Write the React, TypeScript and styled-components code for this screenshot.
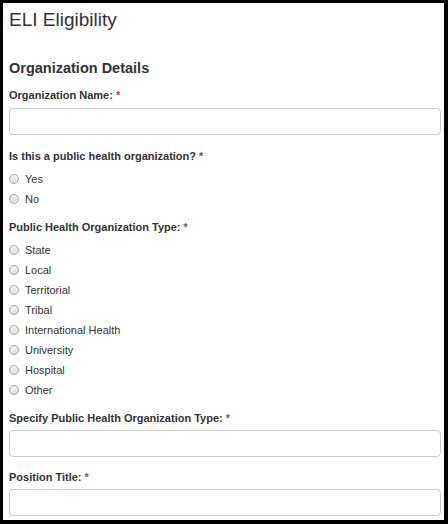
import React from "react";
import styled, { createGlobalStyle } from "styled-components";

const Global = createGlobalStyle`
  html, body { margin: 0; padding: 0; background: #000; }
  body { font-family: "Liberation Sans", Arial, sans-serif; color: #333; }
`;

const Frame = styled.div`
  width: 448px;
  height: 524px;
  box-sizing: border-box;
  border-style: solid;
  border-color: #000;
  border-width: 3px 4px 4px 3px;
  background: #fff;
  overflow: hidden;
`;

const Body = styled.div`
  padding: 0 3px 0 6px;
  display: flex;
  flex-direction: column;
`;

const Title = styled.h1`
  margin: 6px 0 0 0;
  font-size: 19px;
  line-height: 22px;
  font-weight: normal;
  color: #333;
`;

const Section = styled.h2`
  margin: 28px 0 0 0;
  font-size: 14.5px;
  line-height: 18px;
  font-weight: bold;
  color: #333;
`;

const Label = styled.div<{ $top: number }>`
  margin-top: ${(p) => p.$top}px;
  font-size: 11px;
  line-height: 14px;
  font-weight: bold;
  color: #333;
`;

const Req = styled.span`
  color: #a94442;
  margin-left: 3px;
`;

const Input = styled.div<{ $top: number }>`
  margin-top: ${(p) => p.$top}px;
  height: 27px;
  box-sizing: border-box;
  border: 1px solid #ccc;
  border-radius: 4px;
  background: #fff;
`;

const Options = styled.div`
  margin-top: 6px;
  display: flex;
  flex-direction: column;
`;

const Option = styled.label`
  display: flex;
  align-items: center;
  height: 20px;
  font-size: 11px;
  color: #333;
`;

const Radio = styled.span`
  width: 10px;
  height: 10px;
  box-sizing: border-box;
  border-radius: 50%;
  border: 1px solid #a9a9a9;
  background: linear-gradient(#f4f4f4, #dcdcdc);
  margin: 0 6px 0 0;
  flex: none;
`;

const types = [
  "State",
  "Local",
  "Territorial",
  "Tribal",
  "International Health",
  "University",
  "Hospital",
  "Other",
];

export default function App() {
  return (
    <>
      <Global />
      <Frame>
        <Body>
          <Title>ELI Eligibility</Title>
          <Section>Organization Details</Section>
          <Label $top={11}>
            Organization Name:<Req>*</Req>
          </Label>
          <Input $top={6} />
          <Label $top={14}>
            Is this a public health organization?<Req>*</Req>
          </Label>
          <Options>
            {["Yes", "No"].map((o) => (
              <Option key={o}>
                <Radio />
                {o}
              </Option>
            ))}
          </Options>
          <Label $top={11}>
            Public Health Organization Type:<Req>*</Req>
          </Label>
          <Options>
            {types.map((o) => (
              <Option key={o}>
                <Radio />
                {o}
              </Option>
            ))}
          </Options>
          <Label $top={11}>
            Specify Public Health Organization Type:<Req>*</Req>
          </Label>
          <Input $top={5} />
          <Label $top={13}>
            Position Title:<Req>*</Req>
          </Label>
          <Input $top={5} />
        </Body>
      </Frame>
    </>
  );
}
